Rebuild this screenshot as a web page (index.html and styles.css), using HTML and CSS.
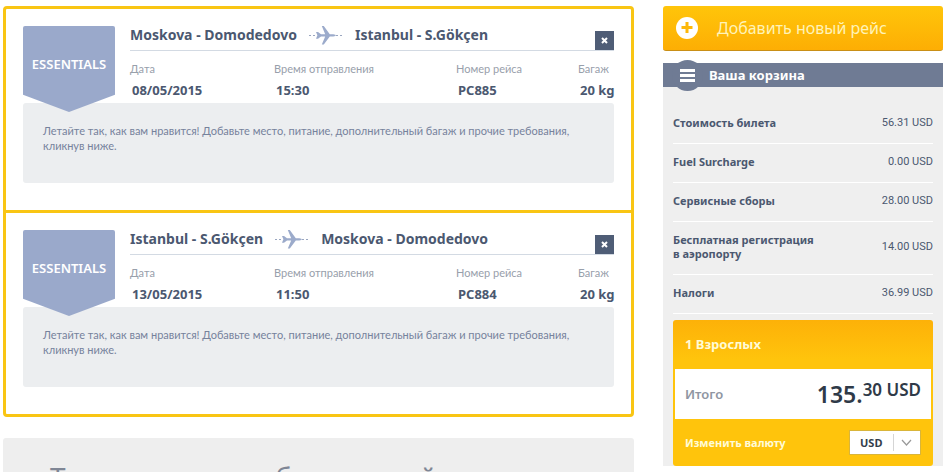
FILE: index.html
```
<!DOCTYPE html>
<html lang="ru">
<head>
    <meta charset="UTF-8">
    <meta name="viewport" content="width=device-width, initial-scale=1.0">
    <title>Ваша корзина</title>
    <link rel="stylesheet" href="styles.css">
</head>
<body>
    <!-- самолёт между городами -->
    <svg class="sprite" aria-hidden="true">
        <symbol id="plane" viewBox="0 0 34 20">
            <path d="M0 10h7M27 10h7" stroke="#9aa6c0" stroke-width="1" stroke-dasharray="2 2" transform="translate(0 .5)"/>
            <path d="M7 7l2 0 3 2.3h4.2L12.8 1h2l6 8.2h3.500q2.600.4 2.600 1.100t-2.600 1.100h-3.500l-6 8.200h-2l3.400-8.200H12l-3 2.300H7l1.400-3.400z" fill="#9cabcb"/>
        </symbol>
    </svg>

    <div class="page">
        <main class="content">
            <div class="trips">
                <section class="trip">
                    <div class="trip-top">
                        <div class="badge">ESSENTIALS</div>
                        <div class="trip-info">
                            <div class="route">
                                <h2>Moskova - Domodedovo</h2>
                                <svg class="plane"><use href="#plane"/></svg>
                                <h2>Istanbul - S.Gökçen</h2>
                                <button type="button" class="close" aria-label="Удалить рейс">
                                    <svg viewBox="0 0 19 19"><path d="M7 7l5 5M12 7l-5 5" stroke="#fff" stroke-width="2"/></svg>
                                </button>
                            </div>
                            <table class="details">
                                <thead>
                                    <tr><th class="date">Дата</th><th class="time">Время отправления</th><th class="number">Номер рейса</th><th>Багаж</th></tr>
                                </thead>
                                <tbody>
                                    <tr><td>08/05/2015</td><td>15:30</td><td>PC885</td><td>20 kg</td></tr>
                                </tbody>
                            </table>
                        </div>
                    </div>
                    <p class="note">Летайте так, как вам нравится! Добавьте место, питание, дополнительный багаж и прочие требования, кликнув ниже.</p>
                </section>

                <section class="trip">
                    <div class="trip-top">
                        <div class="badge">ESSENTIALS</div>
                        <div class="trip-info">
                            <div class="route">
                                <h2>Istanbul - S.Gökçen</h2>
                                <svg class="plane"><use href="#plane"/></svg>
                                <h2>Moskova - Domodedovo</h2>
                                <button type="button" class="close" aria-label="Удалить рейс">
                                    <svg viewBox="0 0 19 19"><path d="M7 7l5 5M12 7l-5 5" stroke="#fff" stroke-width="2"/></svg>
                                </button>
                            </div>
                            <table class="details">
                                <thead>
                                    <tr><th class="date">Дата</th><th class="time">Время отправления</th><th class="number">Номер рейса</th><th>Багаж</th></tr>
                                </thead>
                                <tbody>
                                    <tr><td>13/05/2015</td><td>11:50</td><td>PC884</td><td>20 kg</td></tr>
                                </tbody>
                            </table>
                        </div>
                    </div>
                    <p class="note">Летайте так, как вам нравится! Добавьте место, питание, дополнительный багаж и прочие требования, кликнув ниже.</p>
                </section>
            </div>

            <section class="extras">
                <h1>Также можно выбрать такой</h1>
            </section>
        </main>

        <aside class="sidebar">
            <button type="button" class="add-flight">
                <svg viewBox="0 0 24 24" width="24" height="24">
                    <circle cx="12" cy="12" r="11" fill="#fff"/>
                    <path d="M12 6v11M6.500 11.500h11" stroke="#fdb80a" stroke-width="3"/>
                </svg>
                <span>Добавить новый рейс</span>
            </button>

            <div class="basket">
                <h2 class="basket-title">
                    <svg viewBox="0 0 31 31" width="31" height="31">
                        <circle cx="15.5" cy="15.5" r="15.5" fill="#6f7b94"/>
                        <path d="M8 10.5h15M8 15.5h15M8 20.5h15" stroke="#fff" stroke-width="3"/>
                    </svg>
                    <span>Ваша корзина</span>
                </h2>

                <div class="basket-body">
                    <table class="prices">
                        <tr><th>Стоимость билета</th><td>56.31 USD</td></tr>
                        <tr><th>Fuel Surcharge</th><td>0.00 USD</td></tr>
                        <tr><th>Сервисные сборы</th><td>28.00 USD</td></tr>
                        <tr><th>Бесплатная регистрация<br>в аэропорту</th><td>14.00 USD</td></tr>
                        <tr><th>Налоги</th><td>36.99 USD</td></tr>
                    </table>

                    <div class="total">
                        <h3>1 Взрослых</h3>
                        <div class="total-sum">
                            <span class="total-label">Итого</span>
                            <span class="sum">135.<span class="cents">30 USD</span></span>
                        </div>
                        <div class="currency">
                            <label for="currency">Изменить валюту</label>
                            <div class="select-box">
                                <select id="currency">
                                    <option>USD</option>
                                    <option>EUR</option>
                                    <option>RUB</option>
                                </select>
                                <svg class="arrow" viewBox="0 0 27 23"><path d="M.5 3v17" stroke="#d5d5d5"/><path d="M9 9l4.500 5L18 9" fill="none" stroke="#999" stroke-width="1.200"/></svg>
                            </div>
                        </div>
                    </div>
                </div>
            </div>
        </aside>
    </div>
</body>
</html>
```
FILE: styles.css
```
* {
    box-sizing: border-box;
}

body {
    margin: 0;
    background: #fff;
    color: #4b5870;
    font-family: "Noto Sans", "Open Sans", sans-serif;
    font-size: 11px;
}

h1, h2, h3, p {
    margin: 0;
}

button {
    border: 0;
    padding: 0;
    cursor: pointer;
    font-family: inherit;
}

svg {
    display: block;
}

.sprite {
    display: none;
}

.page {
    display: flex;
    align-items: flex-start;
    gap: 29px;
    padding: 6px 6px 0 3px;
}

.content {
    flex: 1;
    min-width: 0;
}

/* Рейсы */
.trips {
    border: 3px solid #f9c513;
    border-radius: 4px;
}

.trip {
    padding: 17px 17px 27px;
}

.trip + .trip {
    border-top: 3px solid #f9c513;
}

.trip-top {
    display: flex;
    gap: 15px;
    height: 77px;
}

.badge {
    position: relative;
    flex: none;
    width: 92px;
    height: 86px;
    background: #9aa9cb;
    border-radius: 2px;
    clip-path: polygon(0 0, 100% 0, 100% 80%, 50% 100%, 0 80%);
    color: #fff;
    font-size: 13px;
    font-weight: 600;
    line-height: 76px;
    text-align: center;
}

.trip-info {
    flex: 1;
}

.route {
    display: flex;
    align-items: center;
    height: 25px;
    border-bottom: 1px solid #d3dae3;
}

.route h2 {
    font-size: 14px;
    font-weight: 700;
    line-height: 20px;
    padding-bottom: 6px;
}

.plane {
    width: 34px;
    height: 20px;
    margin: 0 12px 6px;
}

.close {
    align-self: flex-end;
    width: 19px;
    height: 19px;
    margin-left: auto;
    background: #4f5d76;
}

.details {
    width: 100%;
    margin-top: 8px;
    border-collapse: collapse;
    table-layout: fixed;
    line-height: 20px;
    text-align: left;
    white-space: nowrap;
}

.details th {
    padding: 0;
    color: #98a0ab;
    font-family: Lato, "Noto Sans", sans-serif;
    font-size: 11px;
    font-weight: 400;
}

.details td {
    padding: 0 0 0 2px;
    font-size: 13px;
    font-weight: 700;
    line-height: 22px;
}

.date {
    width: 144px;
}

.time {
    width: 182px;
}

.number {
    width: 122px;
}

.note {
    min-height: 80px;
    padding: 20px;
    background: #eceef0;
    border-radius: 3px;
    color: #76829c;
    font-family: Lato, "Noto Sans", sans-serif;
    line-height: 15px;
}

.extras {
    margin-top: 21px;
    padding: 20px 47px;
    background: #eee;
    border-radius: 3px 3px 0 0;
}

.extras h1 {
    color: #7f8695;
    font-size: 28px;
    font-weight: 400;
    line-height: 38px;
}

/* Корзина */
.sidebar {
    flex: none;
    width: 280px;
}

.add-flight {
    display: flex;
    align-items: center;
    gap: 18px;
    width: 100%;
    height: 45px;
    padding: 0 12px;
    background: linear-gradient(#ffc50a, #fdae04);
    border-bottom: 1px solid #c98f16;
    border-radius: 3px;
    color: #fff3b8;
    font-size: 16px;
}

.basket {
    margin-top: 12px;
    background: #efefef;
}

.basket-title {
    display: flex;
    align-items: center;
    gap: 6px;
    height: 24px;
    padding-left: 9px;
    background: #6f7b94;
    color: #fff;
    font-size: 13px;
    font-weight: 700;
}

.basket-body {
    padding: 18px 10px 0;
}

.prices {
    width: 100%;
    border-collapse: separate;
    border-spacing: 0;
    line-height: 14px;
}

.prices th,
.prices td {
    height: 39px;
    padding: 11px 0 13px;
    border-bottom: 1px solid #fff;
    font-size: 11px;
}

.prices th {
    text-align: left;
    font-weight: 700;
}

.prices td {
    font-family: Roboto, "Noto Sans", sans-serif;
    text-align: right;
}

.total {
    margin-top: 6px;
    background: linear-gradient(#fdb108, #ffc40c 40px);
    border-radius: 3px;
}

.total h3 {
    padding: 0 12px;
    color: #fffbd6;
    font-size: 13px;
    line-height: 49px;
}

.total-sum {
    display: flex;
    align-items: center;
    justify-content: space-between;
    height: 50px;
    margin: 0 2px;
    padding: 0 10px;
    background: #fff;
}

.total-label {
    color: #8f96a2;
    font-size: 13px;
    font-weight: 600;
}

.sum {
    display: flex;
    align-items: flex-start;
    color: #2f3a48;
    font-size: 23px;
    font-weight: 600;
    line-height: 30px;
}

.cents {
    font-size: 17px;
    line-height: 22px;
}

.currency {
    display: flex;
    align-items: center;
    justify-content: space-between;
    height: 47px;
    padding: 0 12px;
    color: #fffbd6;
    font-size: 11px;
    font-weight: 700;
}

.select-box {
    position: relative;
}

.select-box select {
    appearance: none;
    display: block;
    width: 72px;
    height: 25px;
    padding: 0 28px 0 10px;
    background: #fff;
    border: 1px solid #d9b53a;
    border-radius: 0;
    color: #333d4a;
    font-family: inherit;
    font-size: 11px;
    font-weight: 700;
}

/* стрелка поверх списка */
.arrow {
    position: absolute;
    top: 1px;
    right: 1px;
    width: 27px;
    height: 23px;
    pointer-events: none;
}
```
